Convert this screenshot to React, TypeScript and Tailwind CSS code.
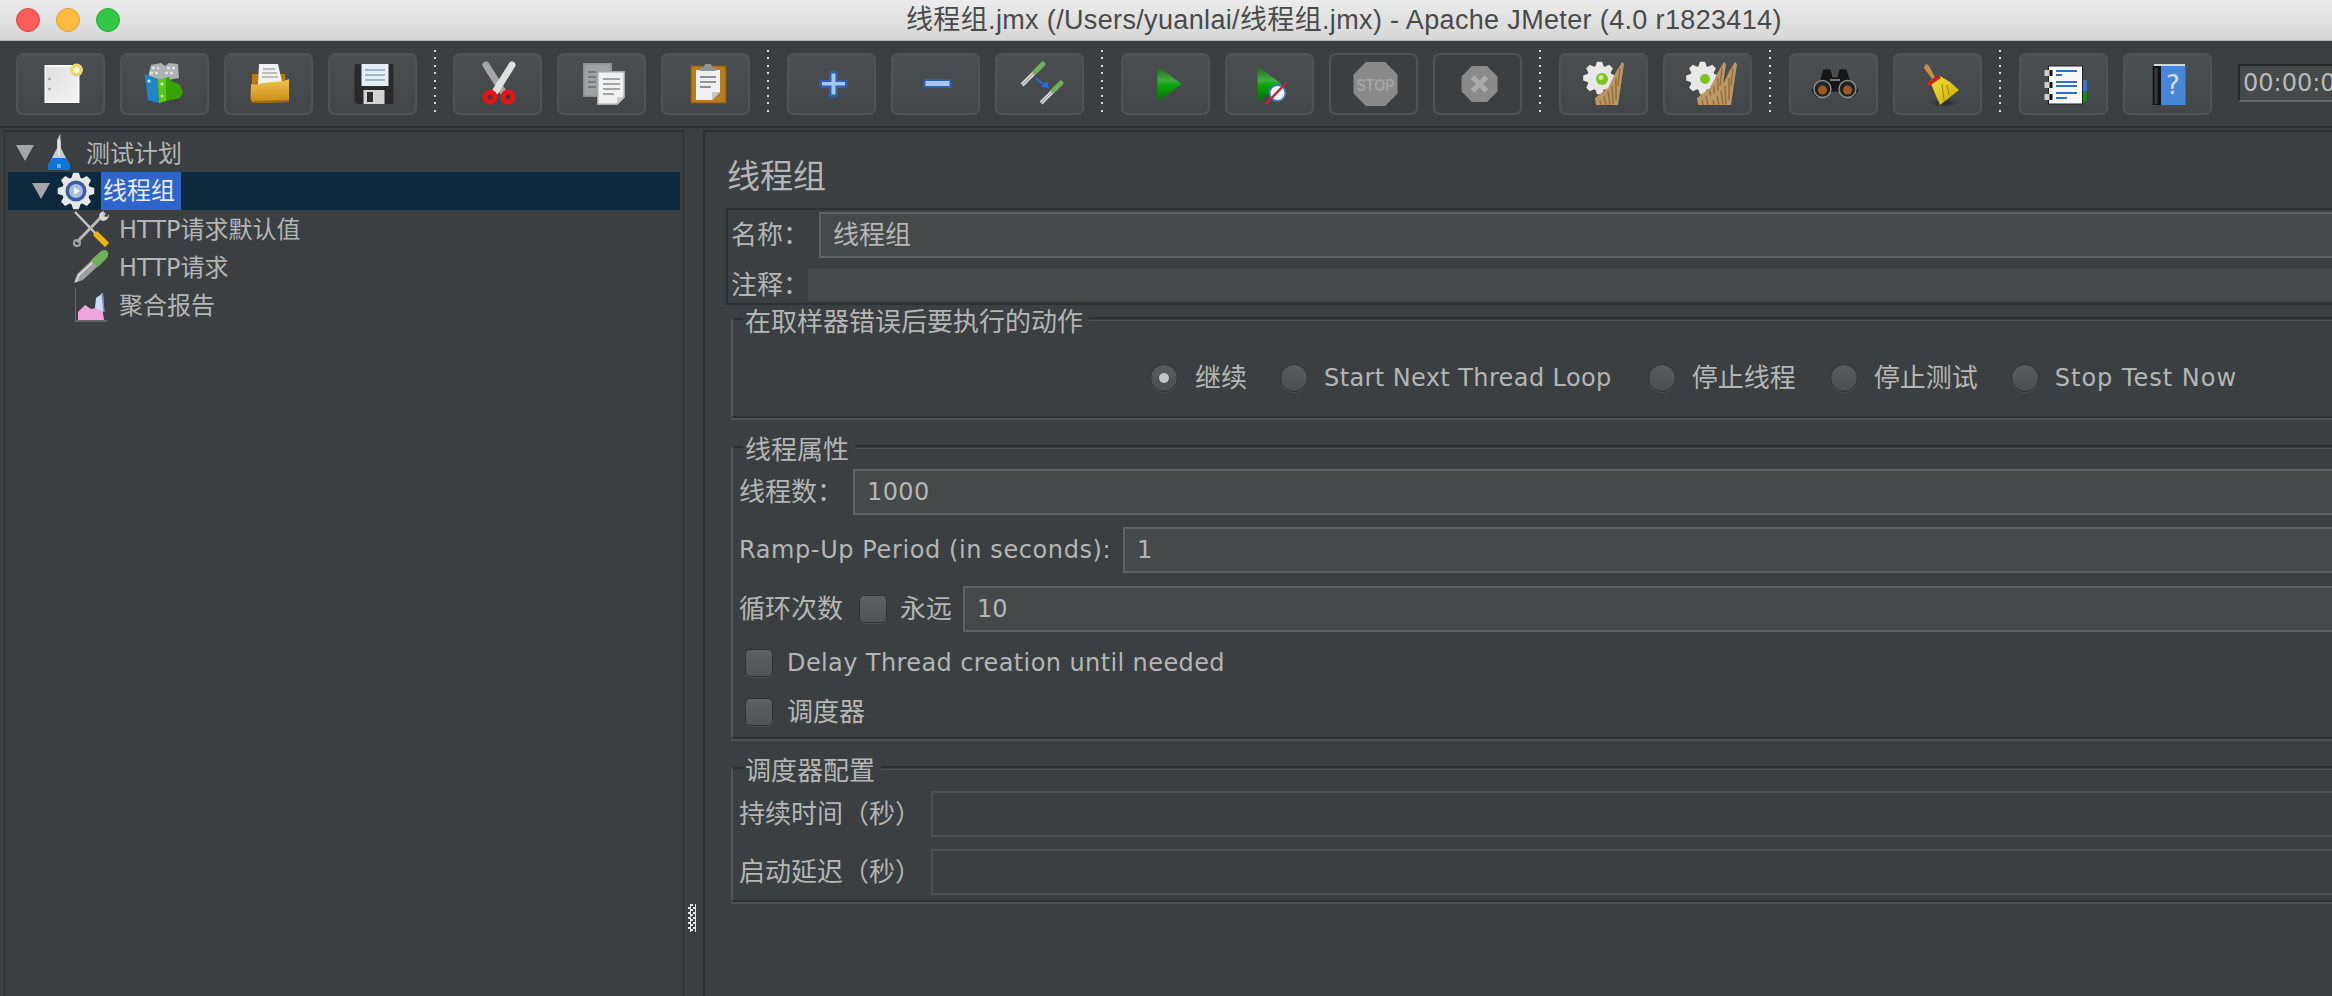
import type { ReactNode } from "react";

const FONT = "font-['DejaVu_Sans','Noto_Sans_CJK_SC',sans-serif]";

// gear outline, used in the tree and the two clear buttons
function gearPath(cx: number, cy: number, outer: number, inner: number, teeth: number) {
  const pts: string[] = [];
  const step = (Math.PI * 2) / teeth;
  for (let i = 0; i < teeth; i++) {
    const a = i * step;
    const at = (r: number, d: number) =>
      `${(cx + r * Math.cos(a + d)).toFixed(2)} ${(cy + r * Math.sin(a + d)).toFixed(2)}`;
    pts.push(at(inner, -step * 0.42), at(outer, -step * 0.2), at(outer, step * 0.2), at(inner, step * 0.42));
  }
  return `M${pts.join("L")}Z`;
}

function Ico({ children }: { children: ReactNode }) {
  return (
    <svg width="48" height="48" viewBox="0 0 48 48" className="overflow-visible shrink-0">
      {children}
    </svg>
  );
}

function NewIcon() {
  return (
    <Ico>
      <defs>
        <linearGradient id="pg" x1="0" y1="0" x2="1" y2="1">
          <stop offset="0" stopColor="#dedede" />
          <stop offset="1" stopColor="#f4f4f4" />
        </linearGradient>
      </defs>
      <rect x="7.5" y="5" width="35" height="38" fill="#f7f7f7" />
      <rect x="9" y="7" width="32" height="34" fill="url(#pg)" />
      <circle cx="12.5" cy="19" r="1.2" fill="#9a9a9a" />
      <circle cx="12.5" cy="29" r="1.2" fill="#9a9a9a" />
      <circle cx="39.5" cy="10" r="6.5" fill="#e9d96a" />
      <circle cx="39.5" cy="10" r="3" fill="#fbf7d4" />
    </Ico>
  );
}

function TemplatesIcon() {
  return (
    <Ico>
      <path d="M7 17 L10 5 L20 3 L24 6 L28 3 L37 4 L38 18 L16 22 Z" fill="#aeb2b4" />
      <path d="M11 8h7M26 8h8M9 13h10M24 13h10" stroke="#e2e4e4" strokeWidth="2.5" strokeDasharray="3 2" />
      <path d="M3.5 14 L17 19 L18 43 L7 40 Z" fill="#1d85c9" />
      <circle cx="8" cy="21" r="1.6" fill="#dff2ff" />
      <path d="M17 20 L28 17 L29 20 L39 25 L42 33 L39 38 L29 40 L18 43 Z" fill="#35a407" />
      <path d="M17 20 L25 18 L25 41 L18 43 Z" fill="#5dc81a" />
      <circle cx="21" cy="24" r="1.6" fill="#dffbc5" />
      <circle cx="21" cy="36" r="1.2" fill="#dffbc5" />
    </Ico>
  );
}

function OpenIcon() {
  return (
    <Ico>
      <defs>
        <linearGradient id="fo" x1="0" y1="0" x2="0" y2="1">
          <stop offset="0" stopColor="#f0c24e" />
          <stop offset="1" stopColor="#c98a12" />
        </linearGradient>
      </defs>
      <path d="M7 14 L40 14 L41 28 L7 28 Z" fill="#b67c12" />
      <path d="M14 4 L33 4 L38 26 L13 26 Z" fill="#f0f1f1" />
      <path d="M18 9h12M17 13h15M17 17h16" stroke="#a9adb0" strokeWidth="1.6" />
      <path d="M6 24 Q12 26 18 23 L39 21 L44 19 L44 42 L9 43 Q6 42 5.5 38 Z" fill="url(#fo)" />
      <path d="M9 43 L44 42 L44 40 L8 41 Z" fill="#9b6b10" />
    </Ico>
  );
}

function SaveIcon() {
  return (
    <Ico>
      <path d="M5.5 6 L7 4 L44.5 4 L44.5 44 L8 44 L5.5 41 Z" fill="#29282b" />
      <rect x="12.5" y="4" width="27" height="22" fill="#e6eef5" />
      <path d="M16 10h20M16 15h20M16 20h20" stroke="#9db7d1" strokeWidth="1.8" />
      <rect x="14.5" y="30" width="21" height="14" fill="#d3d3d3" />
      <rect x="18" y="32" width="6" height="10" fill="#2d2d2f" />
    </Ico>
  );
}

function CutIcon() {
  return (
    <Ico>
      <path d="M12 5 L29 32" stroke="#a7a7a7" strokeWidth="7" strokeLinecap="round" />
      <path d="M38 5 L21 32" stroke="#e0e0e0" strokeWidth="7" strokeLinecap="round" />
      <circle cx="16" cy="37" r="5" fill="#5a3035" stroke="#de1818" strokeWidth="5" />
      <circle cx="34" cy="37" r="5" fill="#5a3035" stroke="#de1818" strokeWidth="5" />
    </Ico>
  );
}

function CopyIcon() {
  return (
    <Ico>
      <rect x="5" y="3" width="29" height="34" fill="#8d8f90" />
      <rect x="6.5" y="4.5" width="26" height="31" fill="#a0a2a3" />
      <path d="M10 12h8M10 17h8M10 22h8M10 27h8" stroke="#777a7b" strokeWidth="1.8" />
      <path d="M19 11 L47 11 L47 37 L39 45 L19 45 Z" fill="#a5a7a8" />
      <path d="M20.5 12.5 L45.5 12.5 L45.5 36 L38 43.5 L20.5 43.5 Z" fill="#f1f1f1" />
      <path d="M25 19h17M25 24h17M25 29h17M25 34h11" stroke="#a3a5a6" strokeWidth="1.8" />
      <path d="M39 45 L39 37 L47 37 Z" fill="#c9cbcb" />
    </Ico>
  );
}

function PasteIcon() {
  return (
    <Ico>
      <rect x="9" y="6" width="35" height="37" fill="#b87b1e" stroke="#8b5a12" />
      <path d="M14 10 L38 10 L38 32 L30 40 L14 40 Z" fill="#f0f0f0" />
      <path d="M18 17h16M18 22h16M18 27h11" stroke="#8f9294" strokeWidth="1.8" />
      <path d="M30 40 L30 32 L38 32 Z" fill="#c4c6c6" />
      <path d="M18 11 L18 8 L22 7 L23 4 L29 4 L30 7 L34 8 L34 11 Z" fill="#8f9495" />
    </Ico>
  );
}

function PlusIcon() {
  return (
    <Ico>
      <path d="M21 11h9v9h9.500v8H30v9h-9v-9h-9.500v-8H21z" fill="#2e60ad" />
      <path d="M23.500 13.500h4V22h9.500v3.500h-9.500v9h-4v-9H14V22h9.500z" fill="#a8c6ec" />
    </Ico>
  );
}

function MinusIcon() {
  return (
    <Ico>
      <rect x="11.500" y="19" width="28" height="9" fill="#2e60ad" />
      <rect x="13.500" y="21" width="24" height="5" fill="#a8c6ec" />
    </Ico>
  );
}

function Pipette({ x1, y1, x2, y2, w = 5 }: { x1: number; y1: number; x2: number; y2: number; w?: number }) {
  const mx = x1 + (x2 - x1) * 0.62;
  const my = y1 + (y2 - y1) * 0.62;
  return (
    <>
      <path d={`M${x1} ${y1}L${mx} ${my}`} stroke="#d9d9d9" strokeWidth={w - 1} />
      <path d={`M${x1} ${y1}L${mx} ${my}`} stroke="#8b8b8b" strokeWidth={1} />
      <path d={`M${mx} ${my}L${x2} ${y2}`} stroke="#6fae5b" strokeWidth={w} strokeLinecap="round" />
    </>
  );
}

function ToggleIcon() {
  return (
    <Ico>
      <Pipette x1={6} y1={25} x2={27} y2={4} />
      <Pipette x1={25} y1={43} x2={45} y2={23} />
      <path d="M20 18 L30 26" stroke="#1f6fe0" strokeWidth="2" />
      <path d="M33 28 L25 27 L31 21 Z" fill="#1f6fe0" />
    </Ico>
  );
}

function PlayIcon() {
  return (
    <Ico>
      <defs>
        <linearGradient id="pl" x1="0" y1="0" x2="0" y2="1">
          <stop offset="0" stopColor="#1f5f1f" />
          <stop offset="0.4" stopColor="#3fae3f" />
          <stop offset="0.52" stopColor="#0aa80a" />
          <stop offset="1" stopColor="#046a04" />
        </linearGradient>
      </defs>
      <path d="M15.500 6 L39.500 24 L15.500 42 Z" fill="url(#pl)" />
    </Ico>
  );
}

function PlayNoTimerIcon() {
  return (
    <Ico>
      <defs>
        <linearGradient id="pn" x1="0" y1="0" x2="0" y2="1">
          <stop offset="0" stopColor="#1f5f1f" />
          <stop offset="0.4" stopColor="#3fae3f" />
          <stop offset="0.52" stopColor="#0aa80a" />
          <stop offset="1" stopColor="#046a04" />
        </linearGradient>
      </defs>
      <path d="M11.500 6 L35.500 24 L11.500 42 Z" fill="url(#pn)" />
      <circle cx="31.500" cy="33" r="8" fill="#f2f5fa" stroke="#3f78bd" strokeWidth="2" />
      <path d="M20 44 L41 22" stroke="#b82a3a" strokeWidth="2.500" />
    </Ico>
  );
}

function StopIcon() {
  return (
    <Ico>
      <path d="M16 2h19l12.500 12.500v19L35 46H16L3.500 33.500v-19z" fill="#8a8a8a" />
      <text x="25.500" y="31" textAnchor="middle" fontFamily="Liberation Sans" fontWeight="700" fontSize="17" fill="#a3a3a3" textLength="38" lengthAdjust="spacingAndGlyphs">
        STOP
      </text>
    </Ico>
  );
}

function ShutdownIcon() {
  return (
    <Ico>
      <path d="M18 6h15l10.500 10.500v15L33 42H18L7.500 31.500v-15z" fill="#8a8a8a" />
      <path d="M18.500 17 L32.500 31M32.500 17 L18.500 31" stroke="#ababab" strokeWidth="5" />
    </Ico>
  );
}

function Broom({ x = 0 }: { x?: number }) {
  return (
    <g transform={`translate(${x} 0)`}>
      <path d="M42 2 L44 4 L38 45 L16 45 L15 38 L28 28 L36 12 Z" fill="#bb9766" />
      <path d="M20 40 L21 45M24 36 L26 45M28 31 L30 45M32 26 L33 44M36 18 L36 40M40 8 L38 26" stroke="#94703f" strokeWidth="1.500" />
    </g>
  );
}

function ClearIcon() {
  return (
    <Ico>
      <path d={gearPath(19.5, 18, 16.5, 12.5, 8)} fill="#e8e8e8" />
      <circle cx="22" cy="19" r="6" fill="#7cc520" />
      <circle cx="21" cy="17.500" r="2.500" fill="#c8ef8f" />
      <Broom />
    </Ico>
  );
}

function ClearAllIcon() {
  return (
    <Ico>
      <path d={gearPath(18.5, 18, 16.5, 12.5, 8)} fill="#e8e8e8" />
      <circle cx="21" cy="19" r="5" fill="#7cc520" />
      <Broom x={-2} />
      <Broom x={9} />
    </Ico>
  );
}

function FindIcon() {
  return (
    <Ico>
      <path d="M14 10 h6 l2 8 h6 l2 -8 h6 l3 10 l9 10 l-4 6 l-8 1 l-8 -6 l-6 0 l-8 6 l-8 -1 l-4 -6 l9 -10 z" fill="#17171a" stroke="#0c0c0c" />
      <circle cx="12.500" cy="29" r="8.500" fill="#222" stroke="#8c8c8c" strokeWidth="1.500" />
      <circle cx="37.500" cy="29" r="8.500" fill="#222" stroke="#8c8c8c" strokeWidth="1.500" />
      <circle cx="12.500" cy="30" r="4.500" fill="#9b5a28" />
      <circle cx="37.500" cy="30" r="4.500" fill="#9b5a28" />
      <path d="M20 20h10" stroke="#7a7a7a" strokeWidth="2" />
    </Ico>
  );
}

function SweepIcon() {
  return (
    <Ico>
      <defs>
        <radialGradient id="sh">
          <stop offset="0" stopColor="#000" stopOpacity="0.5" />
          <stop offset="1" stopColor="#000" stopOpacity="0" />
        </radialGradient>
        <linearGradient id="br" x1="0" y1="0" x2="1" y2="1">
          <stop offset="0" stopColor="#f4e43a" />
          <stop offset="1" stopColor="#c9a90e" />
        </linearGradient>
      </defs>
      <ellipse cx="30" cy="43" rx="15" ry="4" fill="url(#sh)" />
      <path d="M11 5 Q13 3 15 6 L21 17 L18 19 L10 8 Z" fill="#c8914a" />
      <path d="M16 21 L26 16 L36 22 L45 30 L26 45 Q21 34 16 21 Z" fill="url(#br)" />
      <path d="M13 23 L25 15 L27 18 L15 26 Z" fill="#d01f1f" />
      <path d="M28 24 L30 40M33 25 L35 35" stroke="#a88a0c" strokeWidth="1.200" />
    </Ico>
  );
}

function LogIcon() {
  return (
    <Ico>
      <rect x="42" y="20" width="5" height="11" fill="#3476c9" />
      <rect x="42" y="31" width="5" height="11" fill="#178a17" />
      <rect x="8.500" y="6" width="34" height="38" fill="#f8f8f8" stroke="#222" strokeWidth="1" />
      {[13, 25, 37].map((y) => (
        <g key={y}>
          <rect x="4.500" y={y - 3} width="5" height="6" fill="#cfcfcf" />
          <rect x="9.500" y={y - 3} width="3" height="6" fill="#111" />
        </g>
      ))}
      <path d="M16 11h21M16 15h6M16 22h21M16 26h21M16 33h21M16 38h11" stroke="#2d6fd0" strokeWidth="2" />
    </Ico>
  );
}

function HelpIcon() {
  return (
    <Ico>
      <rect x="8.500" y="6" width="33" height="39" fill="#4a86d8" />
      <rect x="8.500" y="6" width="8.500" height="39" fill="#111" />
      <rect x="10.500" y="8" width="3" height="36" fill="#3a3a3a" />
      <rect x="10" y="4" width="31" height="2" fill="#d6d6d6" />
      <text x="29" y="34" textAnchor="middle" fontFamily="DejaVu Sans" fontSize="26" fill="#cfe0f7">
        ?
      </text>
    </Ico>
  );
}

function FlaskIcon() {
  return (
    <svg width="24" height="38" viewBox="0 0 24 38" className="shrink-0">
      <path d="M13 0 L14 9 L14 14 L23 32 L23 36 L1 36 L1 32 L10 14 L10 6 Z" fill="#c7cbce" />
      <path d="M5 24 L19 24 L23 32 L23 36 L1 36 L1 32 Z" fill="#0f74d8" />
      <path d="M10 30h4v4h-4z" fill="#6ab0f0" />
      <path d="M12 6 L12 22" stroke="#eef0f1" strokeWidth="1.500" />
    </svg>
  );
}

function TreeGear() {
  return (
    <svg width="38" height="38" viewBox="0 0 38 38" className="shrink-0">
      <path d={gearPath(19, 19, 18.5, 14, 8)} fill="#e6e6e6" />
      <circle cx="19" cy="19" r="10.500" fill="#3a5f9e" />
      <circle cx="19" cy="19" r="7" fill="#a9bede" />
      <path d="M17 15 L23 19 L17 23 Z" fill="#eef3fb" />
    </svg>
  );
}

function WrenchIcon() {
  return (
    <svg width="36" height="36" viewBox="0 0 36 36" className="shrink-0">
      <path d="M2 1 L24 24" stroke="#c7c7c7" strokeWidth="2.500" />
      <path d="M22 22 L34 34" stroke="#e8b60f" strokeWidth="6" />
      <path d="M32 2 L4 31" stroke="#b9b9b9" strokeWidth="3" />
      <circle cx="4" cy="32" r="3" fill="none" stroke="#a5a5a5" strokeWidth="2" />
      <path d="M27 8 Q24 2 31 0 L30 5 L34 6 L36 3 Q36 10 29 10 Z" fill="#d8d8d8" />
    </svg>
  );
}

function PipetteIcon() {
  return (
    <svg width="36" height="36" viewBox="0 0 36 36" className="shrink-0">
      <path d="M1 34 L4 25 L19 11 L25 17 L10 31 Z" fill="#9e9e9e" />
      <path d="M3 33 L6 26 L19 14" stroke="#e6e6e6" strokeWidth="1.500" fill="none" />
      <path d="M18 11 L27 3 Q32 -1 35 3 Q36 8 32 11 L25 18 Z" fill="#6fb05b" />
    </svg>
  );
}

function ReportIcon() {
  return (
    <svg width="32" height="34" viewBox="0 0 32 34" className="shrink-0">
      <path d="M0 0 V33 H32" stroke="#6f7173" strokeWidth="1.500" fill="none" />
      <path d="M3 32 L3 24 L10 17 L16 21 L21 20 L26 12 L29 32 Z" fill="#efa4e0" />
      <path d="M20 20 L21 10 L28 5 L29 24 L25 22 Z" fill="#c9dcf4" />
      <path d="M27 5 L29 24" stroke="#6f93c9" strokeWidth="1.500" />
    </svg>
  );
}

function ToolButton({ children, disabled }: { children: ReactNode; disabled?: boolean }) {
  return (
    <div
      className={
        disabled
          ? "w-[89px] h-[62px] shrink-0 flex items-center justify-center rounded-[7px] border-2 border-[#505355]"
          : "w-[89px] h-[62px] shrink-0 flex items-center justify-center rounded-[7px] border-2 border-[#505355] bg-gradient-to-b from-[#4b4f51] to-[#424648]"
      }
    >
      {children}
    </div>
  );
}

function Sep({ className }: { className: string }) {
  return (
    <div
      className={`w-[2px] h-[62px] -mt-[3px] shrink-0 bg-[repeating-linear-gradient(to_bottom,#d4d5d5_0,#d4d5d5_2px,transparent_2px,transparent_7.5px)] ${className}`}
    />
  );
}

function Field({ value, className, disabled }: { value?: string; className?: string; disabled?: boolean }) {
  return (
    <div
      className={
        disabled
          ? "flex-1 h-[46px] border-2 border-[#4d5052]"
          : `flex-1 h-[46px] border-2 border-[#5f6263] bg-[#45494a] flex items-center pl-[12px] ${className ?? ""}`
      }
    >
      {value}
    </div>
  );
}

function Radio({ checked }: { checked?: boolean }) {
  return (
    <div className="w-[28px] h-[28px] shrink-0 rounded-full bg-gradient-to-b from-[#5a5d5f] to-[#4b4e50] border border-[#2f3234] shadow-[0_1px_0_#4d5052] flex items-center justify-center">
      {checked && <div className="w-[10px] h-[10px] rounded-full bg-[#c4c6c6]" />}
    </div>
  );
}

function Check() {
  return (
    <div className="w-[28px] h-[28px] shrink-0 rounded-[5px] bg-gradient-to-b from-[#5e6163] to-[#505355] border border-[#2f3234] shadow-[0_1px_0_#4d5052]" />
  );
}

function Group({ title, children, className }: { title: string; children: ReactNode; className: string }) {
  return (
    <div className={`ml-[5px] ${className}`}>
      <div className="flex items-center h-[28px]">
        <div className="w-[12px] h-[15px] self-end border-t-2 border-t-[#2d3032] border-l-2 border-l-[#54575a]" />
        <div className="h-[28px] leading-[34px] px-[2px] whitespace-nowrap">{title}</div>
        <div className="flex-1 ml-[4px] h-[4px] border-t-2 border-t-[#2d3032] border-b border-b-[#505355]" />
      </div>
      <div className="border-l-2 border-l-[#54575a] border-b-2 border-b-[#2d3032] shadow-[0_2px_0_#505355]">{children}</div>
    </div>
  );
}

const tree = [
  { label: "测试计划", arrow: true, pad: "pl-[8px]", icon: <FlaskIcon />, gap: "ml-[15px] pt-[2px]", iconGap: "ml-[6px]" },
  { label: "线程组", arrow: true, pad: "pl-[24px]", icon: <TreeGear />, selected: true },
  { label: "HTTP请求默认值", pad: "pl-[65px]", icon: <WrenchIcon />, gap: "ml-[10px] pt-[2px]" },
  { label: "HTTP请求", pad: "pl-[65px]", icon: <PipetteIcon />, gap: "ml-[10px] pt-[2px]" },
  { label: "聚合报告", pad: "pl-[67px]", icon: <ReportIcon />, gap: "ml-[12px] pt-[2px]" },
];

export default function App() {
  return (
    <div className={`w-[2332px] h-[996px] overflow-hidden flex flex-col bg-[#3c3f41] text-[24px] text-[#b4b6b6] ${FONT}`}>
      {/* Title bar */}
      <header className="h-[41px] shrink-0 relative flex items-center pl-[906px] pt-[1px] bg-gradient-to-b from-[#ececec] to-[#d6d6d6] border-b border-[#b4b4b4] font-['Liberation_Sans','Noto_Sans_CJK_SC',sans-serif] text-[27px] tracking-[0.35px] text-[#4a4a4a] whitespace-nowrap">
        <div className="absolute left-[16px] top-[8px] flex gap-[16px]">
          <div className="w-[24px] h-[24px] rounded-full bg-[#fc5f57] border border-[#e0443e]" />
          <div className="w-[24px] h-[24px] rounded-full bg-[#fdbc40] border border-[#dea034]" />
          <div className="w-[24px] h-[24px] rounded-full bg-[#33c748] border border-[#27aa35]" />
        </div>
        <span>线程组.jmx (/Users/yuanlai/线程组.jmx) - Apache JMeter (4.0 r1823414)</span>
      </header>

      {/* Toolbar */}
      <div className="h-[87px] shrink-0 flex items-start gap-[15px] pl-[16px] pt-[12px] border-b-2 border-[#2d3032]">
        <ToolButton><NewIcon /></ToolButton>
        <ToolButton><TemplatesIcon /></ToolButton>
        <ToolButton><OpenIcon /></ToolButton>
        <ToolButton><SaveIcon /></ToolButton>
        <Sep className="mx-[2px]" />
        <ToolButton><CutIcon /></ToolButton>
        <ToolButton><CopyIcon /></ToolButton>
        <ToolButton><PasteIcon /></ToolButton>
        <Sep className="ml-[2px] mr-[3px]" />
        <ToolButton><PlusIcon /></ToolButton>
        <ToolButton><MinusIcon /></ToolButton>
        <ToolButton><ToggleIcon /></ToolButton>
        <Sep className="ml-[2px] mr-[3px]" />
        <ToolButton><PlayIcon /></ToolButton>
        <ToolButton><PlayNoTimerIcon /></ToolButton>
        <ToolButton disabled><StopIcon /></ToolButton>
        <ToolButton disabled><ShutdownIcon /></ToolButton>
        <Sep className="ml-[2px] mr-[3px]" />
        <ToolButton><ClearIcon /></ToolButton>
        <ToolButton><ClearAllIcon /></ToolButton>
        <Sep className="ml-[2px] mr-[3px]" />
        <ToolButton><FindIcon /></ToolButton>
        <ToolButton><SweepIcon /></ToolButton>
        <Sep className="ml-[2px] mr-[3px]" />
        <ToolButton><LogIcon /></ToolButton>
        <ToolButton><HelpIcon /></ToolButton>
        <div className="ml-[11px] mt-[11px] w-[200px] h-[38px] shrink-0 border-t-2 border-l-2 border-[#26282a] border-b-2 border-b-[#66696a] bg-[#45494a] pl-[3px] leading-[35px] text-[#b8baba] whitespace-nowrap">
          00:00:00
        </div>
      </div>

      <div className="flex-1 min-h-0 flex pl-[4px] pt-[2px]">
        {/* Tree */}
        <aside className="w-[680px] shrink-0 border-t-2 border-x border-[#2d3032] px-[3px] pt-[2px]">
          {tree.map((row) => (
            <div
              key={row.label}
              className={
                row.selected
                  ? `h-[38px] flex items-center ${row.pad} bg-[#0d293e]`
                  : `h-[38px] flex items-center ${row.pad}`
              }
            >
              {row.arrow && (
                <svg width="18" height="16" viewBox="0 0 18 16" className="shrink-0 mr-[7px]">
                  <path d="M0 0H18L9 16Z" fill="#a3a5a6" />
                </svg>
              )}
              {row.iconGap ? <span className={row.iconGap} /> : null}
              {row.icon}
              {row.selected ? (
                <span className="ml-[6px] h-[38px] w-[80px] pl-[2px] leading-[39px] bg-[#2f65ca] text-[#e6ebf3]">{row.label}</span>
              ) : (
                <span className={row.gap}>{row.label}</span>
              )}
            </div>
          ))}
        </aside>

        {/* Split bar */}
        <div className="w-[19px] shrink-0 relative">
          <div className="absolute left-[4px] top-[774px] w-[8px] h-[28px] bg-[repeating-conic-gradient(#e4e4e4_0_25%,#3c3f41_0_50%)] bg-[length:5px_5px]" />
        </div>

        {/* Thread group form */}
        <main className="flex-1 min-w-0 overflow-hidden border-l-2 border-t-2 border-[#2d3032]">
          <div className="w-[1800px] pl-[21px] text-[26px]">
            <h1 className="pt-[23px] h-[76px] text-[33px] font-normal leading-[44px] pl-[1px]">线程组</h1>

            <div className="h-[97px] border-t-2 border-l-2 border-b-2 border-[#2d3032] pl-[3px] pt-[2px]">
              <div className="flex items-center">
                <span className="w-[88px] shrink-0 whitespace-nowrap">名称：</span>
                <Field value="线程组" />
              </div>
              <div className="flex items-center mt-[11px] h-[32px]">
                <span className="w-[77px] shrink-0 whitespace-nowrap">注释：</span>
                <div className="flex-1 h-[32px] bg-[#45494a]" />
              </div>
            </div>

            <Group title="在取样器错误后要执行的动作" className="">
              <div className="h-[83px] pl-[417px] pt-[7px] flex items-center">
                <Radio checked />
                <span className="ml-[17px] mr-[33px]">继续</span>
                <Radio />
                <span className="ml-[16px] mr-[36px] text-[24px] tracking-[0.4px]">Start Next Thread Loop</span>
                <Radio />
                <span className="ml-[16px] mr-[34px]">停止线程</span>
                <Radio />
                <span className="ml-[16px] mr-[33px]">停止测试</span>
                <Radio />
                <span className="ml-[16px] text-[24px] tracking-[1px]">Stop Test Now</span>
              </div>
            </Group>

            <Group title="线程属性" className="mt-[15px]">
              <div className="pl-[6px] pt-[8px] pb-[11px]">
                <div className="flex items-center h-[46px]">
                  <span className="w-[114px] shrink-0">线程数：</span>
                  <Field value="1000" className="text-[24px] tracking-[0.4px]" />
                </div>
                <div className="flex items-center h-[46px] mt-[12px]">
                  <span className="w-[384px] shrink-0 whitespace-nowrap text-[24px] tracking-[0.6px]">Ramp-Up Period (in seconds):</span>
                  <Field value="1" className="text-[24px]" />
                </div>
                <div className="flex items-center h-[46px] mt-[13px]">
                  <span className="w-[120px] shrink-0">循环次数</span>
                  <Check />
                  <span className="ml-[13px] w-[63px] shrink-0">永远</span>
                  <Field value="10" className="text-[24px]" />
                </div>
                <div className="flex items-center h-[28px] mt-[17px] pl-[6px]">
                  <Check />
                  <span className="ml-[14px] text-[24px] tracking-[0.4px]">Delay Thread creation until needed</span>
                </div>
                <div className="flex items-center h-[28px] mt-[21px] pl-[6px]">
                  <Check />
                  <span className="ml-[14px]">调度器</span>
                </div>
              </div>
            </Group>

            <Group title="调度器配置" className="mt-[15px]">
              <div className="pl-[6px] pt-[9px] pb-[5px]">
                <div className="flex items-center h-[46px]">
                  <span className="w-[192px] shrink-0">持续时间（秒）</span>
                  <Field disabled />
                </div>
                <div className="flex items-center h-[46px] mt-[12px]">
                  <span className="w-[192px] shrink-0">启动延迟（秒）</span>
                  <Field disabled />
                </div>
              </div>
            </Group>
          </div>
        </main>
      </div>
    </div>
  );
}
